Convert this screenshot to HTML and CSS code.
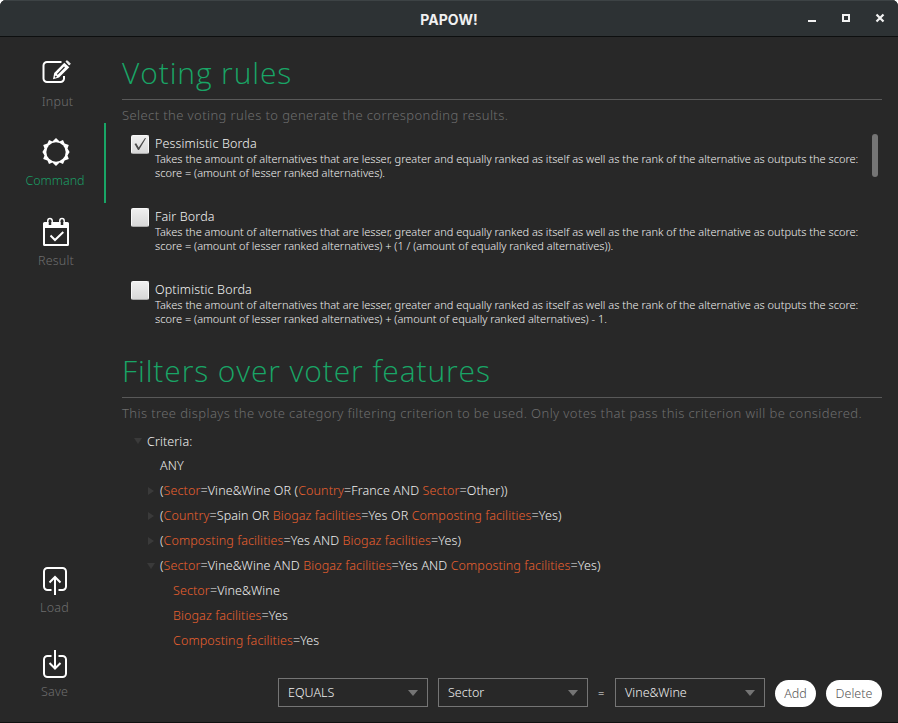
FILE: index.html
```html
<!DOCTYPE html>
<html lang="en">
<head>
<meta charset="utf-8">
<title>PAPOW!</title>
<link rel="stylesheet" href="styles.css">
</head>
<body>
<div class="window">
  <header class="titlebar">
    <span class="title">PAPOW!</span>
    <div class="controls">
      <svg width="10" height="10" viewBox="0 0 10 10"><path d="M1 7h8v2H1z" fill="#f2f2f2"/></svg>
      <svg width="10" height="10" viewBox="0 0 10 10"><path d="M2 1h6v6H2z" fill="none" stroke="#f2f2f2" stroke-width="2"/></svg>
      <svg width="10" height="10" viewBox="0 0 10 10"><path d="M1.500 .5l7 7M8.500 .5l-7 7" stroke="#f2f2f2" stroke-width="2.200"/></svg>
    </div>
  </header>
  <div class="body">
    <nav class="sidebar">
      <a class="nav-item input">
        <svg width="30" height="30" viewBox="0 0 30 30" fill="none" stroke="#fff"><path d="M20.500 5H6a3.500 3.500 0 0 0-3.500 3.500v13A3.500 3.500 0 0 0 6 25h13.500a3.500 3.500 0 0 0 3.500-3.500V19" stroke-width="2"/><path d="M12 22.300l1.200-6.300L23.300 5.700l5 4.500L18 20.600z" fill="#fff" stroke="none"/><path d="M25 4.500l1.200-.8 3 3-.9 1.400z" fill="#fff" stroke="#fff"/><path d="M16.300 17.300L23.500 10" stroke="#282828" stroke-width="1.200"/><path d="M14.200 20.200l1.200-1.200" stroke="#282828" stroke-width="1.500"/></svg>
        <span>Input</span>
      </a>
      <a class="nav-item command active">
        <svg width="30" height="30" viewBox="-15 -15 30 30"><path d="M0-14L3.600-10.500 7-12 8.600-8.600 12.800-7 11.500-3.600 13.600 0 11.500 3.600 12.800 7 8.600 8.600 7 12 3.600 10.500 0 14-3.600 10.500-7 12-8.600 8.600-12.800 7-11.500 3.600-13.600 0-11.500-3.600-12.800-7-8.600-8.600-7-12-3.600-10.500z" fill="#fff"/><circle r="9.700" fill="#282828"/></svg>
        <span>Command</span>
      </a>
      <a class="nav-item result">
        <svg width="30" height="30" viewBox="0 0 30 30"><path d="M3.500 5h23A1.500 1.500 0 0 1 28 6.500v21a1.500 1.500 0 0 1-1.500 1.500h-23A1.500 1.500 0 0 1 2 27.500v-21A1.500 1.500 0 0 1 3.500 5z" fill="#fff"/><path d="M4 11h22v16H4z" fill="#282828"/><path d="M6.800 7V3.700a2.200 2.200 0 0 1 4.400 0V7M18.800 7V3.700a2.200 2.200 0 0 1 4.400 0V7" fill="none" stroke="#fff" stroke-width="1.500"/><path d="M9 4v4M21 4v4" stroke="#282828" stroke-width="2.500"/><path d="M9.500 18.500l4.500 4.500 8.300-8" fill="none" stroke="#fff" stroke-width="2"/></svg>
        <span>Result</span>
      </a>
      <a class="nav-item load">
        <svg width="30" height="30" viewBox="0 0 30 30" fill="none" stroke="#fff" stroke-width="2"><path d="M11.500 24H7.500A3.500 3.500 0 0 1 4 20.500v-15A3.500 3.500 0 0 1 7.500 2h15A3.500 3.500 0 0 1 26 5.500v15a3.500 3.500 0 0 1-3.500 3.500h-4M15 29V11M9.500 16.500L15 11l5.500 5.500"/></svg>
        <span>Load</span>
      </a>
      <a class="nav-item save">
        <svg width="30" height="30" viewBox="0 0 30 30" fill="none" stroke="#fff" stroke-width="2"><path d="M11.500 6H7.500A3.500 3.500 0 0 0 4 9.500v14A3.500 3.500 0 0 0 7.500 27h15a3.500 3.500 0 0 0 3.500-3.500v-14A3.500 3.500 0 0 0 22.500 6h-4M15 0v18.500M9.500 13l5.500 5.500L20.500 13"/></svg>
        <span>Save</span>
      </a>
    </nav>
    <main class="content">
      <section class="voting">
        <h1>Voting rules</h1>
        <p class="hint">Select the voting rules to generate the corresponding results.</p>
        <div class="rules">
          <ul class="rule-list">
            <li class="rule">
              <span class="check"><svg width="18" height="18" viewBox="0 0 18 18"><path d="M3.500 9l1.700-.8 2.500 4.200 6.300-9.400 1 .3-7 11.700H7z" fill="#4a4a4a"/></svg></span>
              <div><h2>Pessimistic Borda</h2><p>Takes the amount of alternatives that are lesser, greater and equally ranked as itself as well as the rank of the alternative as outputs the score:</p><p class="formula">score = (amount of lesser ranked alternatives).</p></div>
            </li>
            <li class="rule">
              <span class="check"></span>
              <div><h2>Fair Borda</h2><p>Takes the amount of alternatives that are lesser, greater and equally ranked as itself as well as the rank of the alternative as outputs the score:</p><p class="formula">score = (amount of lesser ranked alternatives) + (1 / (amount of equally ranked alternatives)).</p></div>
            </li>
            <li class="rule">
              <span class="check"></span>
              <div><h2>Optimistic Borda</h2><p>Takes the amount of alternatives that are lesser, greater and equally ranked as itself as well as the rank of the alternative as outputs the score:</p><p class="formula">score = (amount of lesser ranked alternatives) + (amount of equally ranked alternatives) - 1.</p></div>
            </li>
          </ul>
          <div class="scrollbar"></div>
        </div>
      </section>
      <section class="filters">
        <h1>Filters over voter features</h1>
        <p class="hint">This tree displays the vote category filtering criterion to be used. Only votes that pass this criterion will be considered.</p>
        <ul class="tree">
          <li class="d0"><i class="open"></i><span>Criteria:</span></li>
          <li class="d1"><i></i><span>ANY</span></li>
          <li class="d1"><i class="closed"></i><span>(<b>Sector</b>=Vine&amp;Wine OR (<b>Country</b>=France AND <b>Sector</b>=Other))</span></li>
          <li class="d1"><i class="closed"></i><span>(<b>Country</b>=Spain OR <b>Biogaz facilities</b>=Yes OR <b>Composting facilities</b>=Yes)</span></li>
          <li class="d1"><i class="closed"></i><span>(<b>Composting facilities</b>=Yes AND <b>Biogaz facilities</b>=Yes)</span></li>
          <li class="d1"><i class="open"></i><span>(<b>Sector</b>=Vine&amp;Wine AND <b>Biogaz facilities</b>=Yes AND <b>Composting facilities</b>=Yes)</span></li>
          <li class="d2"><i></i><span><b>Sector</b>=Vine&amp;Wine</span></li>
          <li class="d2"><i></i><span><b>Biogaz facilities</b>=Yes</span></li>
          <li class="d2"><i></i><span><b>Composting facilities</b>=Yes</span></li>
        </ul>
      </section>
      <div class="toolbar">
        <div class="select"><span>EQUALS</span><i></i></div>
        <div class="select"><span>Sector</span><i></i></div>
        <span class="eq">=</span>
        <div class="select"><span>Vine&amp;Wine</span><i></i></div>
        <button class="add">Add</button>
        <button class="delete">Delete</button>
      </div>
    </main>
  </div>
</div>
</body>
</html>
```

FILE: styles.css
```css
* { box-sizing: border-box; margin: 0; padding: 0; }
body { background: #fff; font-family: "Noto Sans", sans-serif; font-weight: 300; font-size: 12px; color: #f0f0f0; }
.window { width: 898px; height: 723px; background: #282828; border-bottom: 1px solid #111; border-radius: 6px 6px 0 0; overflow: hidden; display: flex; flex-direction: column; }
.titlebar { height: 37px; flex: none; display: grid; grid-template-columns: 1fr auto 1fr; align-items: center; background: #2d3234; border-top: 1px solid #3d4345; border-bottom: 1px solid #0d0f0f; }
.title { grid-column: 2; padding-top: 1px; font-family: Inter, sans-serif; font-size: 14px; font-weight: 700; color: #f0f0f0; letter-spacing: .1px; }
.controls { display: flex; gap: 24px; justify-content: flex-end; padding-right: 13px; }
.controls svg { display: block; overflow: visible; }
.controls svg:nth-child(n+2) { margin-top: 1px; }
.body { display: flex; flex: 1; min-height: 0; }
.sidebar { width: 106px; flex: none; padding-top: 6px; display: flex; flex-direction: column; }
.nav-item { height: 80px; flex: none; display: flex; flex-direction: column; align-items: center; padding: 14px 0 0 8px; gap: 5px; color: #6e6e6e; border-right: 2px solid transparent; font-size: 12.500px; line-height: 20px; }
.nav-item svg { display: block; flex: none; }
.nav-item.active { border-color: #19a566; color: #1b9e65; }
.nav-item span { white-space: nowrap; letter-spacing: .2px; }
.input span { padding-left: 3px; }
.command span { margin: -1px 2px 0 0; letter-spacing: 0; }
.result span { margin-top: -1px; }
.load { margin-top: auto; height: 84px; }
.save { height: 72px; }
.load, .save { padding-left: 5px; padding-top: 0; gap: 2px; }
.content { flex: 1; padding: 12px 16px 15px; display: flex; flex-direction: column; }
h1 { height: 51px; border-bottom: 1px solid #595959; font-family: "Open Sans", sans-serif; font-size: 30px; line-height: 48px; font-weight: 300; color: #19a566; white-space: nowrap; letter-spacing: .9px; }
.hint { height: 32px; line-height: 30px; font-size: 13px; color: #6e6e6e; white-space: nowrap; letter-spacing: .4px; }
.rules { display: flex; justify-content: space-between; padding: 2px 4px 0 9px; height: 215px; }
.rule-list { list-style: none; }
.rule { display: flex; gap: 6px; height: 73px; }
.check { width: 18px; height: 19px; margin-top: 1px; border-radius: 2px; background: linear-gradient(#efefef, #d8d8d8); border: 1px solid #f8f8f8; border-bottom-color: #a9a9a9; flex: none; }
.check svg { display: block; margin: -1px; }
.rule h2 { font-size: 12.500px; font-weight: 300; line-height: 20px; margin-bottom: -2px; color: #f4f4f4; letter-spacing: .14px; }
.rule p { font-size: 11px; line-height: 14px; white-space: nowrap; color: #f0f0f0; }
.scrollbar { width: 6px; height: 43px; border-radius: 3px; background: #757575; }
.tree { list-style: none; padding-left: 12px; margin-top: -1px; }
.tree li { display: flex; align-items: center; height: 25px; white-space: nowrap; font-size: 12.500px; letter-spacing: .11px; }
.tree li:first-child { height: 24px; }
.tree i { width: 13px; flex: none; display: flex; }
.tree .open::before { content: ""; border: 4px solid transparent; border-top: 6px solid #3a3a3a; border-bottom: 0; }
.tree .closed::before { content: ""; margin-left: 1px; border: 4px solid transparent; border-left: 6px solid #3a3a3a; border-right: 0; }
.tree b { font-weight: 300; color: #e8602f; }
.d1 { padding-left: 13px; }
.d2 { padding-left: 26px; }
.toolbar { margin-top: auto; display: flex; align-items: center; justify-content: flex-end; gap: 10px; }
.select { width: 150px; height: 29px; border: 1px solid #757575; display: flex; align-items: center; justify-content: space-between; padding: 0 9px; font-size: 12.500px; }
.select i { border: 5px solid transparent; border-top: 6px solid #757575; border-bottom: 0; }
.eq { width: 7px; font-size: 11px; }
button { height: 27px; border: 0; border-radius: 14px; background: #fff; color: #555; font: 300 12.500px "Noto Sans", sans-serif; margin-top: 2px; }
.add { width: 41px; }
.delete { width: 56px; }
```
